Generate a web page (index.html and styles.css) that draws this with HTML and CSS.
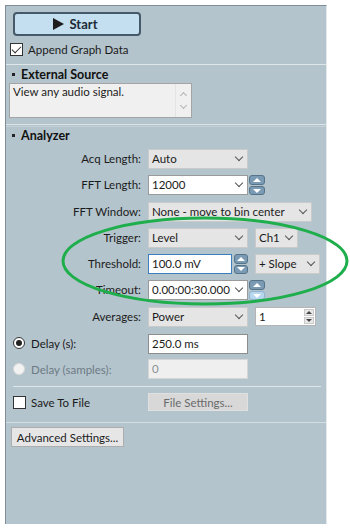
FILE: index.html
```html
<!doctype html>
<html lang="en">
<head>
	<meta charset="UTF-8">
	<title>Analyzer</title>
	<link rel="stylesheet" href="styles.css">
</head>
<body>
	<div class="panel">
		<button class="start"><span class="play"></span>Start</button>
		<div class="check-row top-check"><span class="check on"></span>Append Graph Data</div>
		<div class="sep first"></div>
		<div class="title ext"><span class="dot"></span>External Source</div>
		<div class="memo">
			<span class="memo-text">View any audio signal.</span>
			<span class="memo-scroll"><i class="up"></i><i class="down"></i></span>
		</div>
		<div class="sep double"></div>
		<div class="title"><span class="dot"></span>Analyzer</div>
		<div class="form">
			<label>Acq Length:</label>
			<div class="ctrl"><div class="combo">Auto</div></div>

			<label>FFT Length:</label>
			<div class="ctrl"><div class="combo edit">12000</div><div class="spin"><i class="inc"></i><i class="dec"></i></div></div>

			<label>FFT Window:</label>
			<div class="ctrl"><div class="combo wide">None - move to bin center</div></div>

			<label>Trigger:</label>
			<div class="ctrl"><div class="combo">Level</div><div class="combo ch">Ch1</div></div>

			<label>Threshold:</label>
			<div class="ctrl"><div class="field focus">100.0 mV</div><div class="spin small"><i class="inc"></i><i class="dec"></i></div><div class="combo slope">+ Slope</div></div>

			<label>Timeout:</label>
			<div class="ctrl"><div class="combo edit">0.00:00:30.000</div><div class="spin"><i class="inc"></i><i class="dec hover"></i></div></div>

			<label>Averages:</label>
			<div class="ctrl"><div class="combo">Power</div><div class="num"><span>1</span><span class="num-btns"><i class="inc"></i><i class="dec"></i></span></div></div>

			<div class="opt gap"><span class="radio on"></span>Delay (s):</div>
			<div class="ctrl gap"><div class="field">250.0 ms</div></div>

			<div class="opt off"><span class="radio"></span>Delay (samples):</div>
			<div class="ctrl"><div class="field off">0</div></div>
		</div>
		<div class="sep inset"></div>
		<div class="save">
			<div class="check-row"><span class="check"></span>Save To File</div>
			<button class="file-btn">File Settings...</button>
		</div>
		<div class="sep dotted"></div>
		<button class="adv">Advanced Settings...</button>
	</div>
	<svg class="mark" width="350" height="530" viewBox="0 0 350 530">
		<ellipse cx="205" cy="261" rx="142" ry="43" fill="none" stroke="#1fae4c" stroke-width="3"/>
	</svg>
</body>
</html>
```

FILE: styles.css
```css
*{
	margin:0;
	padding:0;
	box-sizing:border-box;
}
body{
	position:relative;
	background:#fff;
	font-family:Lato,"Noto Sans",sans-serif;
	font-size:11.5px;
	color:#1b1b1b;
}
button{
	font-family:Lato,"Noto Sans",sans-serif;
	font-size:11.5px;
}
.panel{
	margin:5px 0 0 5px;
	width:322px;
	height:519px;
	background:#b4c4cc;
	border-left:1px solid #7e8f9b;
	border-top:1px solid #7e8f9b;
	border-right:1px solid #e2e8eb;
	display:flex;
	flex-direction:column;
	align-items:flex-start;
}
.start{
	margin:6px 0 0 7px;
	width:128px;
	height:24px;
	border:2px solid #45596a;
	border-radius:4px;
	background:#c4dff0;
	font-weight:bold;
	font-size:13px;
	color:#1c2b36;
	display:flex;
	align-items:center;
	justify-content:center;
	gap:6px;
	padding-right:4px;
}
.play{
	width:0;
	height:0;
	border-left:11px solid #1d1d1d;
	border-top:6px solid transparent;
	border-bottom:6px solid transparent;
}
.check-row{
	display:flex;
	align-items:center;
	gap:5px;
	height:13px;
	line-height:13px;
}
.top-check{
	margin:7px 0 0 4px;
}
.check{
	position:relative;
	width:13px;
	height:13px;
	border:1px solid #333;
	background:#fff;
}
.check.on::after{
	content:"";
	position:absolute;
	left:3px;
	top:0;
	width:4px;
	height:8px;
	border-right:1.5px solid #333;
	border-bottom:1.5px solid #333;
	transform:rotate(45deg);
}
.sep{
	align-self:stretch;
	height:1px;
	background:#dfe6ea;
}
.sep.first{
	margin-top:8px;
}
.sep.double{
	margin-top:6px;
	height:3px;
	background:transparent;
	border-top:1px solid #dde4e8;
	border-bottom:1px solid #c6d0d6;
}
.sep.inset{
	margin:7px 5px 0 7px;
}
.sep.dotted{
	margin-top:11px;
	background:#d3dce1;
}
.title{
	display:flex;
	align-items:center;
	gap:6px;
	margin:1px 0 0 6px;
	height:15px;
	line-height:15px;
	font-weight:bold;
	font-size:12.5px;
	color:#111;
}
.title.ext{
	margin-top:2px;
}
.dot{
	width:3px;
	height:3px;
	background:#222;
}
.memo{
	margin:1px 0 0 3px;
	width:183px;
	height:35px;
	background:#f0f0f0;
	border:1px solid #a4a4a4;
	display:flex;
}
.memo-text{
	flex:1;
	padding:1px 3px;
	line-height:14px;
}
.memo-scroll{
	width:16px;
	border-left:1px solid #e4e4e4;
	display:flex;
	flex-direction:column;
	align-items:center;
	justify-content:space-around;
	padding:3px 0;
}
.memo-scroll i{
	width:5px;
	height:5px;
	border-left:1px solid #b4b4b4;
	border-top:1px solid #b4b4b4;
}
.memo-scroll .up{
	transform:rotate(45deg);
	margin-top:3px;
}
.memo-scroll .down{
	transform:rotate(225deg);
	margin-bottom:3px;
}
.form{
	margin-top:6px;
	display:grid;
	grid-template-columns:135px auto;
	grid-auto-rows:20px;
	column-gap:7px;
	row-gap:6.25px;
}
.form label{
	text-align:right;
	line-height:20px;
}
.ctrl{
	display:flex;
}
.combo{
	position:relative;
	width:100px;
	height:20px;
	padding:0 16px 0 3px;
	line-height:18px;
	background:#e5e5e5;
	border:1px solid #cacaca;
	white-space:nowrap;
}
.combo::after{
	content:"";
	position:absolute;
	right:5px;
	top:4px;
	width:5px;
	height:5px;
	border-right:1px solid #555;
	border-bottom:1px solid #555;
	transform:rotate(45deg);
}
.combo.edit{
	background:#fff;
	border-color:#9a9a9a;
}
.combo.wide{
	width:164px;
}
.combo.ch{
	width:43px;
	margin-left:7px;
}
.combo.slope{
	width:65px;
	margin-left:7px;
}
.spin{
	width:16px;
	margin-left:1px;
	display:flex;
	flex-direction:column;
	gap:1px;
}
.spin.small{
	width:14px;
	margin-left:2px;
}
.spin i{
	position:relative;
	flex:1;
	background:#7a9bb3;
	border:1px solid #557489;
	border-radius:3px;
}
.spin i.hover{
	background:#b7d7ee;
	border-color:#8fb3cc;
}
.spin i::after{
	content:"";
	position:absolute;
	left:50%;
	top:50%;
	margin:-2px 0 0 -4px;
	border-left:4px solid transparent;
	border-right:4px solid transparent;
}
.spin .inc::after{
	border-bottom:4px solid #fff;
}
.spin .dec::after{
	border-top:4px solid #fff;
}
.field{
	width:100px;
	height:20px;
	padding-left:3px;
	line-height:18px;
	background:#fff;
	border:1px solid #8d8d8d;
}
.field.focus{
	width:84px;
	border-color:#3c7fc0;
}
.field.off{
	background:#efefef;
	border-color:#d6d6d6;
	color:#8a8f93;
}
.num{
	margin-left:7px;
	width:61px;
	height:19px;
	padding-left:3px;
	line-height:17px;
	background:#fff;
	border:1px solid #b4b4b4;
	display:flex;
	justify-content:space-between;
}
.num-btns{
	width:11px;
	padding:1px 1px 1px 0;
	display:flex;
	flex-direction:column;
	gap:1px;
}
.num-btns i{
	position:relative;
	flex:1;
	background:#e8e8e8;
	border:1px solid #c9c9c9;
}
.num-btns i::after{
	content:"";
	position:absolute;
	left:1px;
	top:1px;
	border-left:3px solid transparent;
	border-right:3px solid transparent;
}
.num-btns .inc::after{
	border-bottom:3px solid #444;
}
.num-btns .dec::after{
	border-top:3px solid #444;
}
.opt{
	display:flex;
	align-items:center;
	gap:6px;
	padding-left:7px;
}
.gap{
	margin-top:1px;
}
.opt.off{
	color:#6d7b85;
}
.radio{
	position:relative;
	width:12px;
	height:12px;
	border-radius:50%;
	border:1px solid #333;
	background:#fff;
}
.radio.on::after{
	content:"";
	position:absolute;
	left:2px;
	top:2px;
	width:6px;
	height:6px;
	border-radius:50%;
	background:#222;
}
.opt.off .radio{
	border-color:#dadada;
	background:#f2f2f2;
}
.save{
	margin-top:6px;
	display:grid;
	grid-template-columns:135px 100px;
	column-gap:7px;
	height:18px;
	align-items:center;
}
.save .check-row{
	margin-left:7px;
}
.file-btn{
	height:18px;
	background:#d8d8d8;
	border:1px solid #e0e0e0;
	color:#6a6a6a;
}
.adv{
	margin:4px 0 0 5px;
	width:113px;
	height:20px;
	background:#e6e6e6;
	border:1px solid #adadad;
	color:#1b1b1b;
}
.mark{
	position:absolute;
	top:0;
	left:0;
	pointer-events:none;
}
```
